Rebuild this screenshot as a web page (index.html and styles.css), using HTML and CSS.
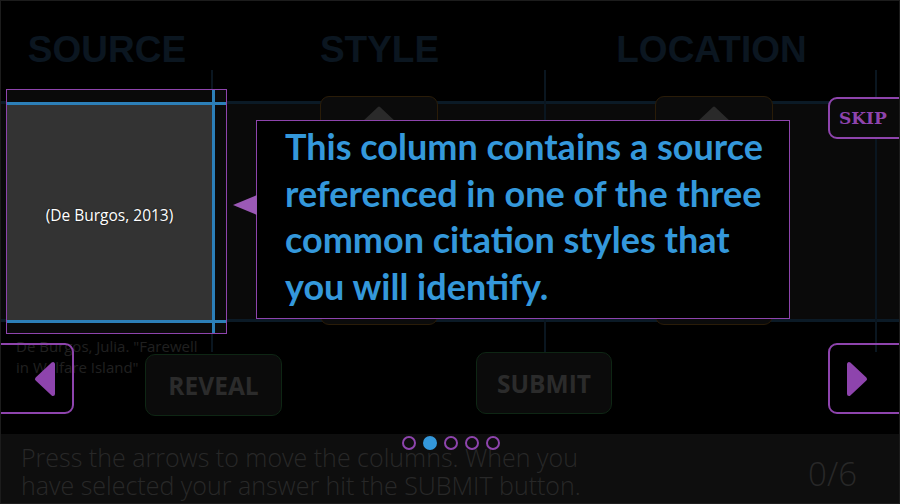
FILE: index.html
```html
<!DOCTYPE html>
<html lang="en">
<head>
<meta charset="utf-8">
<title>Citation Builder</title>
<link rel="stylesheet" href="styles.css">
</head>
<body>
<div class="app">
  <main class="board">
    <h2 class="col-title">SOURCE</h2>
    <h2 class="col-title">STYLE</h2>
    <h2 class="col-title">LOCATION</h2>
    <div class="col-title"></div>

    <div class="track track-source">
      <p class="next-item">De Burgos, Julia. "Farewell<br>in Welfare Island"</p>
    </div>
    <div class="track track-picker">
      <button class="pick" aria-label="Previous style"><svg class="pick-icon" width="40" height="20" viewBox="0 0 40 20"><path d="M20 2 L37 18 L3 18 Z" fill="#2a2a2a" stroke="#2a2a2a" stroke-width="3" stroke-linejoin="round"/></svg></button>
      <button class="pick" aria-label="Next style"><svg class="pick-icon" width="40" height="20" viewBox="0 0 40 20"><path d="M20 18 L37 2 L3 2 Z" fill="#2a2a2a" stroke="#2a2a2a" stroke-width="3" stroke-linejoin="round"/></svg></button>
    </div>
    <div class="track track-picker track-loc">
      <button class="pick" aria-label="Previous location"><svg class="pick-icon" width="40" height="20" viewBox="0 0 40 20"><path d="M20 2 L37 18 L3 18 Z" fill="#2a2a2a" stroke="#2a2a2a" stroke-width="3" stroke-linejoin="round"/></svg></button>
      <button class="pick" aria-label="Next location"><svg class="pick-icon" width="40" height="20" viewBox="0 0 40 20"><path d="M20 18 L37 2 L3 2 Z" fill="#2a2a2a" stroke="#2a2a2a" stroke-width="3" stroke-linejoin="round"/></svg></button>
    </div>
    <div class="track track-end"></div>

    <div class="actions">
      <button class="action action-reveal">REVEAL</button>
      <button class="action">SUBMIT</button>
    </div>
  </main>

  <footer class="footer">
    <p class="hint">Press the arrows to move the columns. When you<br>have selected your answer hit the SUBMIT button.</p>
    <span class="score">0/6</span>
  </footer>

  <button class="nav nav-prev" aria-label="Previous"><svg width="22" height="36" viewBox="0 0 22 36"><path d="M19 3 L19 33 L3 18 Z" fill="#8e44ad" stroke="#8e44ad" stroke-width="4" stroke-linejoin="round"/></svg></button>
  <button class="nav nav-next" aria-label="Next"><svg width="22" height="36" viewBox="0 0 22 36"><path d="M3 3 L3 33 L19 18 Z" fill="#8e44ad" stroke="#8e44ad" stroke-width="4" stroke-linejoin="round"/></svg></button>
  <button class="skip">SKIP</button>

  <div class="spotlight">
    <div class="spot-card">(De Burgos, 2013)</div>
  </div>

  <div class="tip">This column contains a source<br>referenced in one of the three<br>common citation styles that<br>you will identify.</div>

  <div class="dots">
    <span class="dot"></span>
    <span class="dot dot-on"></span>
    <span class="dot"></span>
    <span class="dot"></span>
    <span class="dot"></span>
  </div>
</div>
</body>
</html>
```

FILE: styles.css
```css
* { box-sizing: border-box; }

html, body {
  margin: 0;
  padding: 0;
  background: #000;
}

body {
  width: 900px;
  height: 504px;
  overflow: hidden;
  font-family: "Open Sans", "Liberation Sans", sans-serif;
}

.app {
  position: relative;
  width: 900px;
  height: 504px;
  border: 1px solid #1c1c1c;
  background: #000;
  display: flex;
  flex-direction: column;
  overflow: hidden;
}

/* ---------- board ---------- */
.board {
  height: 433px;
  display: grid;
  grid-template-columns: 212px 333px 331px 1fr;
  grid-template-rows: 69px 282px 82px;
}

.col-title {
  margin: 0;
  padding-top: 28px;
  text-align: center;
  font: bold 37px/1.15 "Liberation Sans", Arial, sans-serif;
  color: #0b1620;
}

.track {
  border-right: 2px solid #0a1620;
  background: linear-gradient(to bottom,
    transparent 0 31px,
    #0b1a26 31px 34px,
    #0a0a0a 34px 249px,
    #0b1a26 249px 252px,
    transparent 252px);
}

.track-end { border-right: 0; }

.track-source {
  padding: 266px 0 0 15px;
}

.next-item {
  margin: 0;
  white-space: nowrap;
  font: 15px/21px "Open Sans", sans-serif;
  color: #202020;
}

.track-picker {
  display: flex;
  flex-direction: column;
  align-items: center;
  justify-content: space-between;
  padding: 26px 0 27px;
}

.track-loc { padding-left: 7px; }

.pick {
  width: 118px;
  height: 56px;
  border: 1.5px solid #2a1c08;
  border-radius: 9px;
  background: #0b0b0b;
  display: flex;
  justify-content: center;
  align-items: flex-start;
  padding: 9px 0 0;
}

.pick:last-child { align-items: flex-end; padding: 0 0 9px; }

.pick-icon { display: block; }

.actions {
  grid-column: 1 / -1;
  display: flex;
  align-items: flex-start;
  gap: 194px;
  padding-left: 144px;
}

.action {
  width: 136px;
  height: 62px;
  border: 1.5px solid #0e2614;
  border-radius: 10px;
  background: #0b0b0b;
  color: #2b2b2b;
  font: bold 24.5px "Open Sans", sans-serif;
  padding: 0;
}

.action-reveal { width: 137px; margin-top: 2px; }

/* ---------- footer ---------- */
.footer {
  flex: 1;
  background: #0e0e0e;
  display: flex;
  justify-content: space-between;
  align-items: flex-start;
  padding: 9px 42px 0 20px;
}

.hint {
  margin: 0;
  font: 300 25px/28px "Open Sans", sans-serif;
  color: #282828;
}

.score {
  margin-top: 13px;
  font: 300 33px/36px "Open Sans", sans-serif;
  color: #282828;
}

/* ---------- overlays ---------- */
.nav {
  position: absolute;
  top: 342px;
  height: 71px;
  border: 2px solid #8e44ad;
  border-radius: 9px;
  background: transparent;
  display: flex;
  align-items: center;
  padding: 0;
}

.nav svg { display: block; }

.nav-prev {
  left: -12px;
  width: 85px;
  justify-content: flex-end;
  padding-right: 16px;
}

.nav-next {
  left: 827px;
  width: 90px;
  justify-content: flex-start;
  padding-left: 16px;
}

.skip {
  position: absolute;
  left: 827px;
  top: 96px;
  width: 90px;
  height: 42px;
  border: 2px solid #8e44ad;
  border-radius: 9px;
  background: #0a0a0a;
  color: #8e44ad;
  font: bold 17px "DejaVu Serif", serif;
  text-align: left;
  padding: 0 0 0 9px;
}

.spotlight {
  position: absolute;
  left: 5px;
  top: 88px;
  width: 221px;
  height: 245px;
  border: 1px solid #8e44ad;
  background-color: #0a0a0a;
  background-image:
    linear-gradient(#2c7fb8, #2c7fb8),
    linear-gradient(#2c7fb8, #2c7fb8),
    linear-gradient(#2c7fb8, #2c7fb8);
  background-size: 100% 3px, 100% 3px, 3px 100%;
  background-position: 0 12px, 0 230px, 205px 0;
  background-repeat: no-repeat;
  padding-top: 15px;
}

.spot-card {
  width: 205px;
  height: 215px;
  background: #333;
  display: flex;
  align-items: center;
  justify-content: center;
  padding-top: 4px;
  color: #fff;
  font: 15.5px "Open Sans", sans-serif;
  text-shadow: 0 0 2px rgba(0,0,0,0.6);
}

.tip {
  position: absolute;
  left: 255px;
  top: 119px;
  width: 534px;
  height: 199px;
  border: 1.5px solid #8e44ad;
  background: #000;
  padding: 2px 0 0 28px;
  font: bold 36px/46.7px "Lato", sans-serif;
  color: #3498db;
  white-space: nowrap;
}

.tip::before {
  content: "";
  position: absolute;
  left: -24px;
  top: 74px;
  border-style: solid;
  border-width: 10px 24px 10px 0;
  border-color: transparent #9b59b6 transparent transparent;
}

.dots {
  position: absolute;
  left: 401px;
  top: 435px;
  display: flex;
  gap: 7px;
}

.dot {
  width: 14px;
  height: 14px;
  border-radius: 50%;
  border: 2px solid #8e44ad;
}

.dot-on {
  background: #3498db;
  border-color: #3498db;
}
```
